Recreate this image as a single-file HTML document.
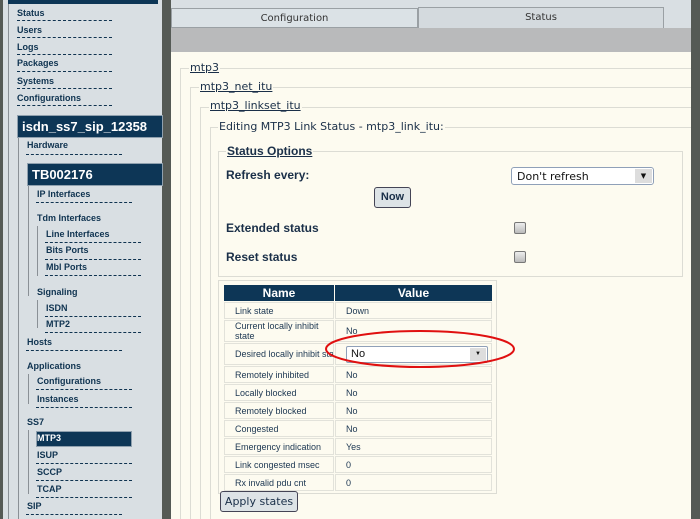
<!DOCTYPE html><html><head><style>
*{margin:0;padding:0;box-sizing:border-box}
body{width:700px;height:519px;position:relative;overflow:hidden;background:#d9dfe3;font-family:"DejaVu Sans","Liberation Sans",sans-serif}
.a{position:absolute}
.s{font:bold 9px "Liberation Sans",sans-serif;color:#0f3350;position:absolute;white-space:nowrap}
.d{position:absolute;border-top:1px dashed #0f3350;height:0}
.bx{position:absolute;background:#0d3656;color:#fff;font:bold 13px "Liberation Sans",sans-serif;padding:3px 0 0 4px;border:1px solid #8fa0ae}
.vl{position:absolute;border-left:1px solid #8a9096}
.hl{position:absolute;border-top:1px solid #8a9096;width:6px}
.fs{position:absolute;border:1px solid #dcdcd4;border-right:none;border-bottom:none}
.lg{position:absolute;font-size:11px;color:#1a2f48;text-decoration:underline;background:#fdfbf0;padding:0 1px}
.lb{position:absolute;font:bold 12px "Liberation Sans",sans-serif;color:#1a2f48}
.cb{position:absolute;width:12px;height:12px;border:1px solid #777;background:linear-gradient(#eee,#bbb);border-radius:2px}
td{font:9px "Liberation Sans",sans-serif;color:#1a3550;height:17px;padding-left:10px;background:#fdfbf0;border:1px solid #e2e2da}
</style></head><body>
<div class="a" style="left:0;top:0;width:3px;height:519px;background:#555a55"></div>
<div class="a" style="left:162px;top:0;width:9px;height:519px;background:#555a55"></div>
<div class="a" style="left:8px;top:0;width:150px;height:4px;background:#0d3656"></div>
<div class="vl" style="left:8px;top:4px;height:515px"></div>
<div class="s" style="left:17px;top:8px">Status</div><div class="d" style="left:17px;top:20px;width:95px"></div>
<div class="s" style="left:17px;top:25px">Users</div><div class="d" style="left:17px;top:37px;width:95px"></div>
<div class="s" style="left:17px;top:42px">Logs</div><div class="d" style="left:17px;top:54px;width:95px"></div>
<div class="s" style="left:17px;top:58px">Packages</div><div class="d" style="left:17px;top:71px;width:95px"></div>
<div class="s" style="left:17px;top:76px">Systems</div><div class="d" style="left:17px;top:88px;width:95px"></div>
<div class="s" style="left:17px;top:93px">Configurations</div><div class="d" style="left:17px;top:105px;width:95px"></div>
<div class="bx" style="left:17px;top:115px;width:146px;height:23px">isdn_ss7_sip_12358</div>
<div class="vl" style="left:18px;top:138px;height:381px"></div>
<div class="s" style="left:27px;top:140px">Hardware</div><div class="d" style="left:26px;top:154px;width:96px"></div>
<div class="bx" style="left:27px;top:163px;width:136px;height:23px">TB002176</div>
<div class="vl" style="left:28px;top:186px;height:110px"></div>
<div class="s" style="left:37px;top:189px">IP Interfaces</div><div class="d" style="left:36px;top:202px;width:96px"></div>
<div class="s" style="left:37px;top:213px">Tdm Interfaces</div>
<div class="vl" style="left:37px;top:226px;height:50px"></div>
<div class="s" style="left:46px;top:229px">Line Interfaces</div><div class="d" style="left:45px;top:242px;width:96px"></div>
<div class="s" style="left:46px;top:245px">Bits Ports</div><div class="d" style="left:45px;top:259px;width:96px"></div>
<div class="s" style="left:46px;top:262px">Mbl Ports</div><div class="d" style="left:45px;top:275px;width:96px"></div>
<div class="s" style="left:37px;top:287px">Signaling</div>
<div class="vl" style="left:37px;top:300px;height:28px"></div>
<div class="s" style="left:46px;top:303px">ISDN</div><div class="d" style="left:45px;top:316px;width:96px"></div>
<div class="s" style="left:46px;top:319px">MTP2</div><div class="d" style="left:45px;top:332px;width:96px"></div>
<div class="s" style="left:27px;top:337px">Hosts</div><div class="d" style="left:26px;top:350px;width:96px"></div>
<div class="s" style="left:27px;top:361px">Applications</div>
<div class="vl" style="left:28px;top:374px;height:30px"></div>
<div class="s" style="left:37px;top:376px">Configurations</div><div class="d" style="left:36px;top:389px;width:96px"></div>
<div class="s" style="left:37px;top:394px">Instances</div><div class="d" style="left:36px;top:407px;width:96px"></div>
<div class="s" style="left:27px;top:417px">SS7</div>
<div class="vl" style="left:28px;top:430px;height:64px"></div>
<div class="a" style="left:36px;top:431px;width:96px;height:16px;background:#0d3656;border:1px solid #8fa0ae"></div>
<div class="s" style="left:37px;top:433px;color:#fff">MTP3</div>
<div class="s" style="left:37px;top:450px">ISUP</div><div class="d" style="left:36px;top:463px;width:96px"></div>
<div class="s" style="left:37px;top:467px">SCCP</div><div class="d" style="left:36px;top:480px;width:96px"></div>
<div class="s" style="left:37px;top:484px">TCAP</div><div class="d" style="left:36px;top:497px;width:96px"></div>
<div class="s" style="left:27px;top:501px">SIP</div><div class="d" style="left:26px;top:514px;width:96px"></div>

<div class="a" style="left:171px;top:8px;width:247px;height:20px;background:#dbe2e6;border:1px solid #9aa0a4;font-size:10px;color:#333;text-align:center;line-height:19px">Configuration</div>
<div class="a" style="left:418px;top:7px;width:246px;height:21px;background:#d4dade;border:1px solid #9aa0a4;border-bottom:none;font-size:10px;color:#333;text-align:center;line-height:19px">Status</div>
<div class="a" style="left:171px;top:28px;width:520px;height:24px;background:#b9babb"></div>
<div class="a" style="left:171px;top:52px;width:520px;height:467px;background:#fdfbf0"></div>
<div class="a" style="left:691px;top:0;width:9px;height:519px;background:#555a55"></div>

<div class="fs" style="left:180px;top:68px;width:511px;height:451px"></div>
<div class="lg" style="left:189px;top:61px">mtp3</div>
<div class="fs" style="left:190px;top:87px;width:501px;height:432px"></div>
<div class="lg" style="left:199px;top:80px">mtp3_net_itu</div>
<div class="fs" style="left:200px;top:107px;width:491px;height:412px"></div>
<div class="lg" style="left:209px;top:99px">mtp3_linkset_itu</div>
<div class="fs" style="left:210px;top:127px;width:481px;height:392px"></div>
<div class="a" style="left:218px;top:120px;font-size:11px;color:#1a2f48;background:#fdfbf0;padding:0 1px">Editing MTP3 Link Status - mtp3_link_itu:</div>
<div class="a" style="left:218px;top:151px;width:465px;height:126px;border:1px solid #dcdcd4"></div>
<div class="lb" style="left:226px;top:144px;text-decoration:underline;background:#fdfbf0;padding:0 1px">Status Options</div>
<div class="lb" style="left:226px;top:168px">Refresh every:</div>
<div class="a" style="left:511px;top:167px;width:143px;height:18px;border:1px solid #8fa0b8;border-radius:3px;background:#fff;font-size:11px;padding:2px 0 0 5px;color:#111">Don't refresh<div class="a" style="right:1px;top:1px;width:17px;height:14px;background:#ddd;font-size:7px;text-align:center;line-height:14px">▼</div></div>
<div class="a" style="left:374px;top:187px;width:37px;height:21px;border:1px solid #445;border-radius:3px;background:#dde3e6;font:bold 11px 'Liberation Sans',sans-serif;text-align:center;line-height:19px;color:#1a2f48">Now</div>
<div class="lb" style="left:226px;top:221px">Extended status</div>
<div class="cb" style="left:514px;top:222px"></div>
<div class="lb" style="left:226px;top:250px">Reset status</div>
<div class="cb" style="left:514px;top:251px"></div>

<div class="a" style="left:218px;top:280px;width:279px;height:214px;border:1px solid #dcdcd4"></div>
<table class="a" style="left:223px;top:284px;width:270px;border-collapse:separate;border-spacing:1px">
<tr><th style="background:#0d3656;color:#fff;font:bold 12px 'Liberation Sans',sans-serif;height:16px;width:110px">Name</th><th style="background:#0d3656;color:#fff;font:bold 12px 'Liberation Sans',sans-serif">Value</th></tr>
<tr><td>Link state</td><td>Down</td></tr>
<tr><td>Current locally inhibit state</td><td>No</td></tr>
<tr><td style="height:22px;white-space:nowrap;overflow:hidden;max-width:110px">Desired locally inhibit state</td><td style="padding-left:10px"><div style="width:142px;height:17px;border:1px solid #8fa0b8;border-radius:2px;background:#fff;font-size:11px;padding:1px 0 0 4px;position:relative;color:#111">No<div class="a" style="right:1px;top:1px;width:16px;height:13px;background:#ddd;font-size:6px;text-align:center;line-height:13px">▼</div></div></td></tr>
<tr><td>Remotely inhibited</td><td>No</td></tr>
<tr><td>Locally blocked</td><td>No</td></tr>
<tr><td>Remotely blocked</td><td>No</td></tr>
<tr><td>Congested</td><td>No</td></tr>
<tr><td>Emergency indication</td><td>Yes</td></tr>
<tr><td>Link congested msec</td><td>0</td></tr>
<tr><td>Rx invalid pdu cnt</td><td>0</td></tr>
</table>
<svg class="a" style="left:320px;top:325px" width="200" height="50"><ellipse cx="100" cy="24" rx="94" ry="18" fill="none" stroke="#e01010" stroke-width="2"/></svg>
<div class="a" style="left:220px;top:491px;width:78px;height:21px;border:1px solid #445;border-radius:3px;background:#dde3e6;font-size:11px;text-align:center;line-height:19px;color:#1a2f48">Apply states</div>
</body></html>
